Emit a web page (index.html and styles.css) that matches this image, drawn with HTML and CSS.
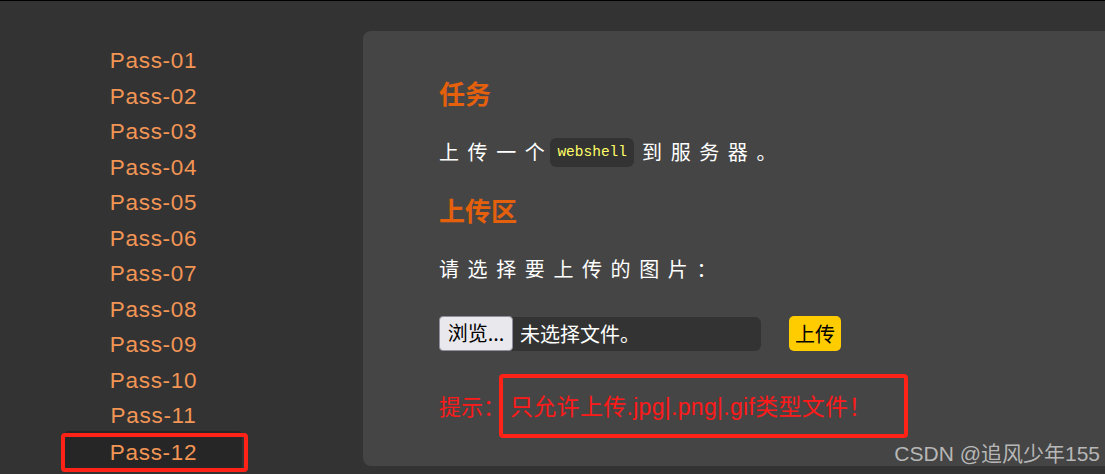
FILE: index.html
```html
<!DOCTYPE html>
<html lang="zh-CN">
<head>
    <meta charset="UTF-8">
    <title>upload-labs Pass-12</title>
    <link rel="stylesheet" href="styles.css">
</head>
<body>
    <div id="page">
        <ul class="menu">
            <li><a href="#">Pass-01</a></li>
            <li><a href="#">Pass-02</a></li>
            <li><a href="#">Pass-03</a></li>
            <li><a href="#">Pass-04</a></li>
            <li><a href="#">Pass-05</a></li>
            <li><a href="#">Pass-06</a></li>
            <li><a href="#">Pass-07</a></li>
            <li><a href="#">Pass-08</a></li>
            <li><a href="#">Pass-09</a></li>
            <li><a href="#">Pass-10</a></li>
            <li><a href="#">Pass-11</a></li>
            <li class="active"><a href="#">Pass-12</a></li>
        </ul>

        <div class="panel">
            <h2>任务</h2>
            <p>上传一个<code>webshell</code>到服务器。</p>
            <h2>上传区</h2>
            <p>请选择要上传的图片：</p>
            <form class="upload-row" onsubmit="return false">
                <label class="file-input">
                    <span class="file-btn">浏览...</span>
                    <span class="file-name">未选择文件。</span>
                </label>
                <button class="upload-btn">上传</button>
            </form>
            <div class="hint">提示：<span class="hint-mark">只允许上传.jpg|.png|.gif类型文件！</span></div>
        </div>
    </div>
    <div class="mark-side"></div>
    <div class="watermark">CSDN @追风少年155</div>
</body>
</html>
```

FILE: styles.css
```css
html, body {
    margin: 0;
    padding: 0;
    height: 100%;
    overflow: hidden;
}

body {
    background-color: #333;
    border-top: 1px solid #000;
    font-family: "Liberation Sans", "Noto Sans CJK SC", sans-serif;
    position: relative;
}

#page {
    display: flex;
    height: 100%;
}

.menu {
    list-style: none;
    margin: 0;
    padding: 42px 0 0 65px;
    width: 298px;
    flex-shrink: 0;
}

.menu li {
    width: 177px;
    height: 35.5px;
    line-height: 35.5px;
    text-align: center;
}

.menu a {
    color: #f29555;
    text-decoration: none;
    font-size: 22.5px;
    letter-spacing: 0.7px;
}

.menu li.active {
    background-color: #262626;
    border-radius: 4px 4px 0 0;
    height: 40px;
    margin-top: -3px;
    line-height: 44px;
}

.panel {
    flex: 1;
    background-color: #454545;
    margin-top: 30px;
    height: 435px;
    border-radius: 8px 0 0 8px;
    padding: 47px 0 0 76px;
    box-sizing: border-box;
    color: #fff;
}

.panel h2 {
    margin: 0;
    font-family: "Noto Sans CJK SC", sans-serif;
    font-size: 26px;
    line-height: 30px;
    color: #e4600c;
    font-weight: bold;
}

.panel p {
    margin: 29px 0 28px;
    font-family: "Noto Sans CJK SC", sans-serif;
    font-size: 20px;
    line-height: 30px;
    letter-spacing: 8.6px;
    display: flex;
    align-items: center;
}

.panel p:last-of-type {
    margin-bottom: 32px;
}

code {
    font-family: "Liberation Mono", monospace;
    font-size: 14.5px;
    letter-spacing: 0;
    color: #ffff66;
    background-color: #333;
    border-radius: 6px;
    padding: 0 7px;
    height: 29px;
    line-height: 29px;
    margin: 0 8px 0 -3px;
}

.upload-row {
    display: flex;
    align-items: center;
    height: 35px;
    margin: 0;
}

.file-input {
    display: flex;
    width: 322px;
    height: 34px;
    background-color: #333;
    border-radius: 6px;
    font-family: "Noto Sans CJK SC", sans-serif;
    font-size: 20px;
}

.file-btn {
    background-color: #e9e9ed;
    color: #000;
    border: 1px solid #8f8f9d;
    border-radius: 4px;
    width: 72px;
    height: 33px;
    line-height: 32px;
    text-align: center;
    margin-top: -1px;
}

.file-name {
    color: #fff;
    padding-left: 7px;
    line-height: 33px;
}

.upload-btn {
    margin-left: 28px;
    background-color: #ffcc00;
    color: #000;
    border: none;
    border-radius: 5px;
    width: 52px;
    height: 35px;
    padding: 0;
    font-family: "Noto Sans CJK SC", sans-serif;
    font-size: 20px;
}

.hint {
    margin-top: 41px;
    color: #ff1a1a;
    font-family: "Liberation Sans", "Noto Sans CJK SC", sans-serif;
    font-size: 22px;
    line-height: 30px;
}

.hint-mark {
    margin-left: 5px;
    font-size: 23px;
    letter-spacing: 0.3px;
}

/* screenshot annotations */
.hint-mark::after {
    content: "";
    position: absolute;
    left: 499px;
    top: 373px;
    width: 401px;
    height: 56px;
    border: 4px solid #ff2317;
    border-radius: 4px;
}

.mark-side {
    position: absolute;
    left: 61px;
    top: 432px;
    width: 179px;
    height: 31px;
    border: 4px solid #ff2317;
    border-radius: 4px;
}

.watermark {
    position: absolute;
    right: 5px;
    top: 436px;
    font-family: "Liberation Sans", "Noto Sans CJK SC", sans-serif;
    font-size: 21px;
    color: rgba(205, 205, 205, 0.85);
}
```
